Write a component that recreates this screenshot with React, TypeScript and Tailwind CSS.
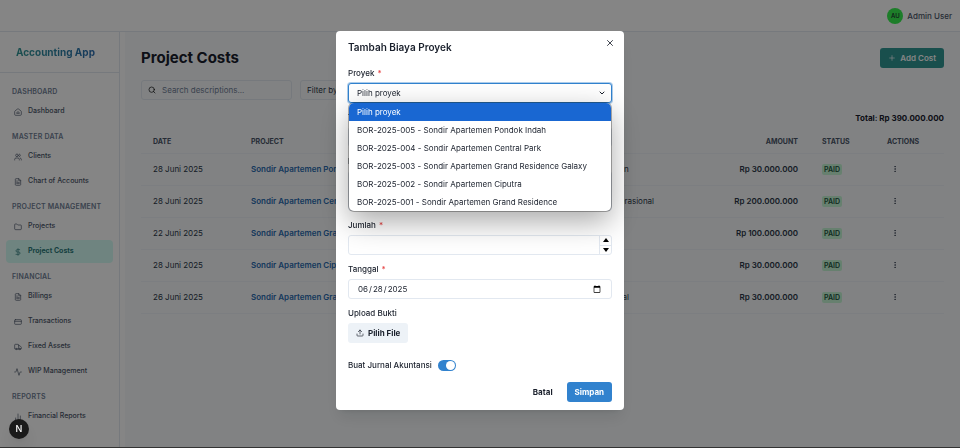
import type { ComponentType, ReactNode } from "react";
import {
  Activity,
  ChartNoAxesColumn,
  ChevronDown,
  CreditCard,
  DollarSign,
  EllipsisVertical,
  FileText,
  Folder,
  Plus,
  Search,
  Truck,
  Upload,
  Users,
  X,
} from "lucide-react";

type NavItem = { label: string; icon: ComponentType<{ className?: string }>; active?: boolean };

function HomeIcon({ className }: { className?: string }) {
  return (
    <svg viewBox="0 0 24 24" fill="none" stroke="currentColor" strokeWidth="2" strokeLinejoin="round" className={className}>
      <path d="M2 11c0-1 .4-1.700 1.200-2.300l7-5.500a3 3 0 0 1 3.600 0l7 5.500c.8.6 1.200 1.300 1.200 2.300v8a3 3 0 0 1-3 3H5a3 3 0 0 1-3-3z" />
      <path d="M8 16v-2l4-3 4 3v2z" />
    </svg>
  );
}

const NAV: { title: string; items: NavItem[] }[] = [
  { title: "Dashboard", items: [{ label: "Dashboard", icon: HomeIcon }] },
  {
    title: "Master Data",
    items: [
      { label: "Clients", icon: Users },
      { label: "Chart of Accounts", icon: FileText },
    ],
  },
  {
    title: "Project Management",
    items: [
      { label: "Projects", icon: Folder },
      { label: "Project Costs", icon: DollarSign, active: true },
    ],
  },
  {
    title: "Financial",
    items: [
      { label: "Billings", icon: FileText },
      { label: "Transactions", icon: CreditCard },
      { label: "Fixed Assets", icon: Truck },
      { label: "WIP Management", icon: Activity },
    ],
  },
  { title: "Reports", items: [{ label: "Financial Reports", icon: ChartNoAxesColumn }] },
];

const COSTS = [
  { date: "28 Juni 2025", project: "Sondir Apartemen Pondok Indah", category: "Pengerjaan", amount: "Rp 30.000.000" },
  { date: "28 Juni 2025", project: "Sondir Apartemen Central Park", category: "Biaya Operasional", amount: "Rp 200.000.000" },
  { date: "22 Juni 2025", project: "Sondir Apartemen Grand Residence", category: "Survei", amount: "Rp 100.000.000" },
  { date: "28 Juni 2025", project: "Sondir Apartemen Ciputra", category: "Survei", amount: "Rp 30.000.000" },
  { date: "26 Juni 2025", project: "Sondir Apartemen Grand Residence", category: "Biaya Lokal", amount: "Rp 30.000.000" },
];

const PROJECTS = [
  "Pilih proyek",
  "BOR-2025-005 - Sondir Apartemen Pondok Indah",
  "BOR-2025-004 - Sondir Apartemen Central Park",
  "BOR-2025-003 - Sondir Apartemen Grand Residence Galaxy",
  "BOR-2025-002 - Sondir Apartemen Ciputra",
  "BOR-2025-001 - Sondir Apartemen Grand Residence",
];

function Sidebar() {
  return (
    <aside className="w-[120px] shrink-0 border-r border-[#e2e8f0] bg-white">
      <div className="flex h-[41px] items-center border-b border-[#e2e8f0] px-4">
        <span className="bg-linear-to-r from-[#319795] to-[#2b6cb0] bg-clip-text text-[10px] font-bold whitespace-nowrap text-transparent">
          Accounting App
        </span>
      </div>
      <nav className="flex flex-col gap-2 px-[6px] pt-[13px]">
        {NAV.map((group) => (
          <div key={group.title}>
            <h2 className="mb-[2px] px-[6px] text-[7px] leading-3 font-semibold tracking-wide whitespace-nowrap text-[#718096] uppercase">
              {group.title}
            </h2>
            <ul className="flex flex-col gap-[2px]">
              {group.items.map(({ label, icon: Icon, active }) => (
                <li key={label}>
                  <a
                    href="#"
                    className={
                      active
                        ? "flex h-[23px] items-center gap-[6px] rounded-sm bg-[#d5fdf5] px-2 text-[7px] font-bold text-[#2c7a7b]"
                        : "flex h-[23px] items-center gap-[6px] rounded-sm px-2 text-[7px] font-medium text-[#4a5568]"
                    }
                  >
                    <Icon className="size-2" />
                    {label}
                  </a>
                </li>
              ))}
            </ul>
          </div>
        ))}
      </nav>
    </aside>
  );
}

function CostTable() {
  return (
    <table className="mt-2 w-full table-fixed text-[8px] text-[#2d3748]">
      <colgroup>
        <col className="w-[98px]" />
        <col className="w-[335px]" />
        <col />
        <col className="w-[108px]" />
        <col className="w-[65px]" />
        <col className="w-[69px]" />
      </colgroup>
      <thead>
        <tr className="h-[21px] border-b border-[#edf2f7] text-left text-[7px] text-[#4a5568] uppercase">
          <th className="px-3 font-bold">Date</th>
          <th className="px-3 font-bold">Project</th>
          <th className="px-3 font-bold">Type</th>
          <th className="px-3 text-right font-bold">Amount</th>
          <th className="px-3 font-bold">Status</th>
          <th className="px-3 font-bold">Actions</th>
        </tr>
      </thead>
      <tbody>
        {COSTS.map((cost, i) => (
          <tr key={i} className="h-8 border-b border-[#edf2f7] whitespace-nowrap">
            <td className="px-3">{cost.date}</td>
            <td className="px-3">
              <a href="#" className="font-semibold text-[#2b6cb0]">
                {cost.project}
              </a>
            </td>
            <td className="px-3">{cost.category}</td>
            <td className="px-3 text-right font-semibold">{cost.amount}</td>
            <td className="px-3">
              <span className="rounded-xs bg-[#c6f6d5] px-[2px] py-[1px] text-[7px] font-semibold text-[#22543d]">PAID</span>
            </td>
            <td className="px-3">
              <button type="button" aria-label="Actions" className="flex w-4 justify-center">
                <EllipsisVertical className="size-2" />
              </button>
            </td>
          </tr>
        ))}
      </tbody>
    </table>
  );
}

function Field({ id, label, required, children }: { id: string; label: string; required?: boolean; children: ReactNode }) {
  return (
    <div>
      <label htmlFor={id} className="mb-[3px] block text-[8px] leading-[14px] font-medium">
        {label}
        {required && <span className="ml-[3px] text-[#e53e3e]">*</span>}
      </label>
      {children}
    </div>
  );
}

const INPUT = "block h-5 w-full rounded-[3px] border border-[#e2e8f0] bg-transparent px-2 text-[8px]";

function ProjectSelect() {
  return (
    <div className="relative">
      <select
        id="project"
        className="block h-5 w-full appearance-none rounded-[3px] border border-[#3182ce] bg-white px-2 text-[8px] ring-1 ring-[#3182ce]/40 outline-none"
      >
        {PROJECTS.map((p) => (
          <option key={p}>{p}</option>
        ))}
      </select>
      <ChevronDown className="pointer-events-none absolute top-[6px] right-[6px] size-2" strokeWidth={3} />
      <ul
        role="listbox"
        aria-label="Proyek"
        className="absolute inset-x-px top-full z-10 overflow-hidden rounded-[5px] bg-white text-[8px] leading-[18px] shadow-[0_0_0_1px_rgba(0,0,0,0.3),0_10px_30px_rgba(0,0,0,0.35)]"
      >
        {PROJECTS.map((p, i) => (
          <li
            key={p}
            role="option"
            aria-selected={i === 0}
            className="px-2 whitespace-nowrap aria-selected:bg-[#1967d2] aria-selected:text-white"
          >
            {p}
          </li>
        ))}
      </ul>
    </div>
  );
}

function AddCostModal() {
  return (
    <div className="fixed inset-0 flex items-start justify-center border-b border-[#333333] bg-black/48 pt-[31px]">
      <div
        role="dialog"
        aria-modal="true"
        aria-labelledby="modal-title"
        className="w-[288px] rounded-[4px] bg-white px-3 pb-2 text-[#1a202c] shadow-lg"
      >
        <header className="flex h-[35px] justify-between">
          <h2 id="modal-title" className="pt-2 text-[10px] leading-4 font-semibold">
            Tambah Biaya Proyek
          </h2>
          <button type="button" aria-label="Close" className="-mr-[10px] flex size-6 items-center justify-center self-start">
            <X className="size-[10px]" />
          </button>
        </header>
        <form className="flex flex-col gap-[7px]">
          <Field id="project" label="Proyek" required>
            <ProjectSelect />
          </Field>
          <Field id="category" label="Tipe" required>
            <input id="category" className={INPUT} />
          </Field>
          <Field id="description" label="Deskripsi" required>
            <textarea
              id="description"
              className="block h-10 w-full resize-none rounded-[3px] border border-[#e2e8f0] px-2 text-[8px]"
            />
          </Field>
          <Field id="amount" label="Jumlah" required>
            <div className="flex h-5 rounded-[3px] border border-[#e2e8f0]">
              <input id="amount" inputMode="decimal" className="min-w-0 flex-1 bg-transparent px-2 text-[8px] outline-none" />
              <div className="flex w-3 flex-col border-l border-[#e2e8f0]">
                <button type="button" aria-label="Increase" className="flex flex-1 items-center justify-center border-b border-[#e2e8f0]">
                  <svg viewBox="0 0 6 4" className="h-1 w-[6px]">
                    <path d="M3 0 6 4H0z" />
                  </svg>
                </button>
                <button type="button" aria-label="Decrease" className="flex flex-1 items-center justify-center">
                  <svg viewBox="0 0 6 4" className="h-1 w-[6px]">
                    <path d="M0 0h6L3 4z" />
                  </svg>
                </button>
              </div>
            </div>
          </Field>
          <Field id="date" label="Tanggal" required>
            <input id="date" type="date" defaultValue="2025-06-28" className={INPUT} />
          </Field>
          <Field id="receipt" label="Upload Bukti">
            <button
              id="receipt"
              type="button"
              className="flex h-5 items-center gap-1 rounded-[3px] bg-[#edf2f7] px-2 text-[8px] font-bold"
            >
              <Upload className="size-2" />
              Pilih File
            </button>
          </Field>
          <div className="flex items-center gap-[6px] pt-2">
            <label htmlFor="journal" className="text-[8px] leading-[14px] font-medium">
              Buat Jurnal Akuntansi
            </label>
            <input
              id="journal"
              type="checkbox"
              role="switch"
              defaultChecked
              className="flex h-[11px] w-[18px] appearance-none items-center justify-end rounded-full bg-[#3182ce] px-px before:size-[9px] before:rounded-full before:bg-white"
            />
          </div>
          <footer className="flex justify-end gap-[6px] pt-[3px]">
            <button type="button" className="h-5 px-2 text-[8px] font-bold">
              Batal
            </button>
            <button type="submit" className="h-5 rounded-[3px] bg-[#3182ce] px-2 text-[8px] font-bold text-white">
              Simpan
            </button>
          </footer>
        </form>
      </div>
    </div>
  );
}

export default function App() {
  return (
    <div className="flex min-h-screen flex-col bg-white font-['Inter',sans-serif]">
      <header className="flex h-8 items-center justify-end gap-1 border-b border-[#e2e8f0] bg-white px-2">
        <span className="flex size-4 items-center justify-center rounded-full bg-[#38f050] text-[6px] font-medium text-[#1a202c]">AU</span>
        <span className="text-[8px] font-medium text-[#4a5568]">Admin User</span>
      </header>
      <div className="flex flex-1">
        <Sidebar />
        <main className="ml-[5px] min-w-0 flex-1 bg-[#f7fafc] px-4 pt-4">
          <div className="flex items-center justify-between">
            <h1 className="text-[15px] leading-5 font-bold text-[#1a202c]">Project Costs</h1>
            <button
              type="button"
              className="flex h-5 items-center gap-1 rounded-[3px] bg-[#319795] px-2 text-[8px] font-semibold text-white"
            >
              <Plus className="size-2" />
              Add Cost
            </button>
          </div>
          <div className="mt-3 flex gap-2">
            <label className="flex h-5 w-[151px] items-center gap-[6px] rounded-[3px] border border-[#e2e8f0] px-[6px]">
              <Search className="size-2 shrink-0" />
              <input
                type="search"
                aria-label="Search descriptions"
                placeholder="Search descriptions..."
                className="w-full min-w-0 bg-transparent text-[8px] placeholder:text-[#718096]"
              />
            </label>
            <button
              type="button"
              className="h-5 w-[130px] rounded-[3px] border border-[#e2e8f0] px-[6px] text-left text-[8px] text-[#2d3748]"
            >
              Filter by project
            </button>
          </div>
          <p className="mt-3 text-right text-[8px] leading-3 font-bold text-[#1a202c]">Total: Rp 390.000.000</p>
          <CostTable />
        </main>
      </div>
      <AddCostModal />
      <button
        type="button"
        aria-label="Open Next.js Dev Tools"
        className="fixed bottom-[9px] left-[9px] flex size-5 items-center justify-center rounded-full bg-[#1a1a1a] text-[9px] font-medium text-white shadow-lg"
      >
        N
      </button>
    </div>
  );
}
